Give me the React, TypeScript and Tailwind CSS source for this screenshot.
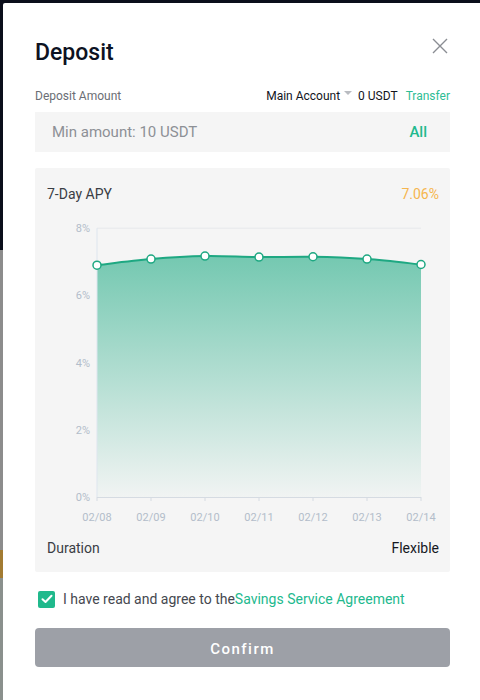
import React from 'react';

const dates = ['02/08', '02/09', '02/10', '02/11', '02/12', '02/13', '02/14'];
const apy = [6.9, 7.08, 7.17, 7.14, 7.15, 7.08, 6.92];

// chart geometry (svg coordinates, svg sits at card's left edge)
const X0 = 62;
const STEP = 54;
const Y_ZERO = 282;
const PX_PER_PCT = 33.6;

const pts = apy.map((v, i) => [X0 + i * STEP, Y_ZERO - v * PX_PER_PCT] as const);

function smoothPath(p: readonly (readonly [number, number])[]) {
    let d = `M${p[0][0]},${p[0][1]}`;
    for (let i = 0; i < p.length - 1; i++) {
        const p0 = p[i - 1] || p[i];
        const p1 = p[i];
        const p2 = p[i + 1];
        const p3 = p[i + 2] || p2;
        const c1x = p1[0] + (p2[0] - p0[0]) / 6;
        const c1y = p1[1] + (p2[1] - p0[1]) / 6;
        const c2x = p2[0] - (p3[0] - p1[0]) / 6;
        const c2y = p2[1] - (p3[1] - p1[1]) / 6;
        d += ` C${c1x},${c1y} ${c2x},${c2y} ${p2[0]},${p2[1]}`;
    }
    return d;
}

const ApyChart = () => {
    const line = smoothPath(pts);
    const last = pts[pts.length - 1];
    const area = `${line} L${last[0]},${Y_ZERO} L${pts[0][0]},${Y_ZERO} Z`;
    const yTicks = [0, 2, 4, 6, 8];

    return (
        <svg width="415" height="315" viewBox="0 0 415 315" className="block">
            <defs>
                <linearGradient id="apyFill" x1="0" y1="0" x2="0" y2="1">
                    <stop offset="0%" stopColor="#2fb08c" stopOpacity="0.65" />
                    <stop offset="100%" stopColor="#2fb08c" stopOpacity="0.02" />
                </linearGradient>
            </defs>

            {/* top grid line */}
            <line x1={X0} y1={Y_ZERO - 8 * PX_PER_PCT} x2={X0 + 6 * STEP} y2={Y_ZERO - 8 * PX_PER_PCT} stroke="#e6e8eb" strokeWidth="1" />

            {yTicks.map((t) => (
                <text
                    key={t}
                    x={X0 - 7}
                    y={Y_ZERO - t * PX_PER_PCT + 4}
                    textAnchor="end"
                    fontSize="11"
                    fill="#b3bdca"
                    fontFamily="Roboto, sans-serif"
                >
                    {t}%
                </text>
            ))}

            <path d={area} fill="url(#apyFill)" />

            {/* axes */}
            <line x1={X0} y1={Y_ZERO - 8 * PX_PER_PCT} x2={X0} y2={Y_ZERO} stroke="#dde5ee" strokeWidth="1" />
            <line x1={X0} y1={Y_ZERO + 0.5} x2={X0 + 6 * STEP} y2={Y_ZERO + 0.5} stroke="#d5dbe2" strokeWidth="1" />
            {pts.map(([x], i) => (
                <line key={i} x1={x} y1={Y_ZERO} x2={x} y2={Y_ZERO + 4} stroke="#d5dbe2" strokeWidth="1" />
            ))}

            <path d={line} fill="none" stroke="#1ea882" strokeWidth="2" />
            {pts.map(([x, y], i) => (
                <circle key={i} cx={x} cy={y} r="4" fill="#ffffff" stroke="#1ea882" strokeWidth="1.5" />
            ))}

            {dates.map((d, i) => (
                <text
                    key={d}
                    x={X0 + i * STEP}
                    y={Y_ZERO + 24}
                    textAnchor="middle"
                    fontSize="11"
                    fill="#b3bdca"
                    fontFamily="Roboto, sans-serif"
                >
                    {d}
                </text>
            ))}
        </svg>
    );
};

export default function App() {
    return (
        <div className="flex h-[700px] w-[480px] overflow-hidden bg-[#0b0e1b] pt-[3px] font-['Roboto',sans-serif]">
            {/* backdrop sliver */}
            <div className="flex w-[3px] shrink-0 flex-col">
                <div className="h-[247px] bg-[#0b0e1b]" />
                <div className="h-[300px] bg-[#8c8c8c]" />
                <div className="h-[28px] bg-[#a27b32]" />
                <div className="flex-1 bg-[#8a908d]" />
            </div>

            {/* modal */}
            <div className="flex-1 rounded-tl-[2px] bg-white pl-8 pr-[30px] pt-[36px]">
                <div className="flex items-start justify-between">
                    <h1 className="text-[23px] font-medium leading-[28px] text-[#0d1222]">Deposit</h1>
                    <button className="mr-[2px] -mt-[1px] text-[#8a8d93]">
                        <svg width="16" height="16" viewBox="0 0 16 16" fill="none" stroke="currentColor" strokeWidth="1.4">
                            <path d="M1 1 L15 15 M15 1 L1 15" />
                        </svg>
                    </button>
                </div>

                <div className="mt-[21px] flex h-4 items-center justify-between text-[12px]">
                    <span className="text-[#6b6e75]">Deposit Amount</span>
                    <div className="flex items-center">
                        <span className="text-[#12151d]">Main Account</span>
                        <span className="ml-[4px] mr-[6px] mb-[6px] h-0 w-0 border-x-[4px] border-t-[4px] border-x-transparent border-t-[#b9bcc1]" />
                        <span className="text-[#12151d]">0 USDT</span>
                        <span className="ml-[8px] text-[#2ebd95]">Transfer</span>
                    </div>
                </div>

                <div className="mt-2 flex h-10 items-center justify-between bg-[#f5f5f5] pl-[17px] pr-[23px]">
                    <span className="text-[15px] text-[#8d9096]">Min amount: 10 USDT</span>
                    <span className="text-[15px] font-medium text-[#22b98e]">All</span>
                </div>

                <div className="mt-4 rounded-[2px] bg-[#f5f5f5] pb-[14px] pt-4">
                    <div className="flex h-5 items-center justify-between pl-3 pr-[11px] text-[14px]">
                        <span className="text-[#3a3d44]">7-Day APY</span>
                        <span className="text-[#f5b54e]">7.06%</span>
                    </div>
                    <div className="mt-[11px]">
                        <ApyChart />
                    </div>
                    <div className="mt-2 flex h-5 items-center justify-between pl-3 pr-[11px] text-[14px]">
                        <span className="text-[#3a3d44]">Duration</span>
                        <span className="text-[#15181f]">Flexible</span>
                    </div>
                </div>

                <label className="mt-[17px] flex h-5 items-center pl-[3px]">
                    <span className="flex h-[17px] w-[17px] items-center justify-center rounded-[2px] bg-[#20b98c]">
                        <svg width="12" height="10" viewBox="0 0 12 10" fill="none" stroke="#ffffff" strokeWidth="2" strokeLinecap="round" strokeLinejoin="round">
                            <path d="M1.5 5.2 L4.5 8 L10.5 1.8" />
                        </svg>
                    </span>
                    <span className="ml-2 text-[14px] text-[#45484f]">
                        I have read and agree to the<span className="text-[#22b98e]">Savings Service Agreement</span>
                    </span>
                </label>

                <button className="mt-[19px] flex h-[39px] w-full items-center justify-center rounded-[4px] bg-[#9da0a7] pt-[3px] text-[15px] font-medium tracking-[1.5px] text-white">
                    Confirm
                </button>
            </div>
        </div>
    );
}
